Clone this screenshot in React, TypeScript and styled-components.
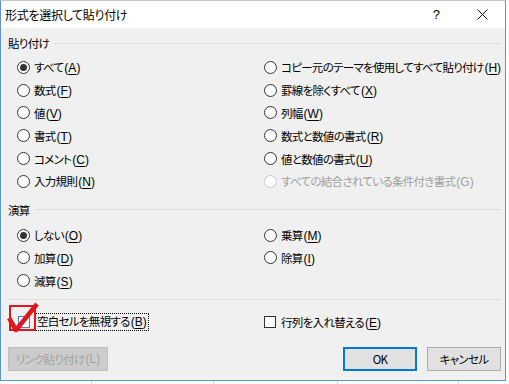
import React from 'react';
import styled, { createGlobalStyle } from 'styled-components';

const GlobalStyle = createGlobalStyle`
  html, body {
    margin: 0;
    padding: 0;
  }
  body {
    width: 509px;
    height: 384px;
    overflow: hidden;
    background-color: #ffffff;
    background-image: linear-gradient(90deg, transparent 91px, #d4d4d4 91px, #d4d4d4 92px, transparent 92px),
      linear-gradient(90deg, transparent 213px, #d4d4d4 213px, #d4d4d4 214px, transparent 214px),
      linear-gradient(90deg, transparent 337px, #d4d4d4 337px, #d4d4d4 338px, transparent 338px),
      linear-gradient(90deg, transparent 458px, #d4d4d4 458px, #d4d4d4 459px, transparent 459px);
    font-family: "Noto Sans CJK JP", "Liberation Sans", sans-serif;
    font-feature-settings: "palt";
    font-size: 11.5px;
    letter-spacing: -0.7px;
    color: #000;
  }
`;

const Dialog = styled.div`
  position: relative;
  width: 504px;
  height: 379px;
  border: 1px solid #5b93d3;
  border-top-color: #c8c8c8;
  background: #f0f0f0;
  display: flex;
  flex-direction: column;
`;

const TitleBar = styled.div`
  height: 27px;
  background: #fff;
  display: flex;
  align-items: center;
`;

const Title = styled.div`
  flex: 1;
  padding-left: 4px;
  font-size: 12px;
  letter-spacing: -0.3px;
`;

const TitleButton = styled.div`
  width: 46px;
  height: 27px;
  display: flex;
  align-items: center;
  justify-content: center;
  font-family: "Liberation Sans", sans-serif;
  font-size: 13px;
`;

const Body = styled.div`
  flex: 1;
  padding: 7px 4px 0 7px;
  display: flex;
  flex-direction: column;
`;

const GroupHeader = styled.div<{ top?: number }>`
  display: flex;
  align-items: center;
  gap: 5px;
  height: 16px;
  margin-top: ${({ top }) => top ?? 0}px;
  &::after {
    content: '';
    flex: 1;
    height: 1px;
    background: #dcdcdc;
  }
`;

const OptionGrid = styled.div<{ top: number }>`
  display: grid;
  grid-template-columns: 247px 1fr;
  grid-auto-rows: 22.8px;
  margin-top: ${({ top }) => top}px;
  padding-left: 9px;
`;

const OptionLabel = styled.label<{ disabled?: boolean }>`
  display: flex;
  align-items: center;
  gap: 4px;
  white-space: nowrap;
  color: ${({ disabled }) => (disabled ? '#a0a0a0' : '#000')};
`;

const Circle = styled.span<{ checked?: boolean; disabled?: boolean }>`
  box-sizing: border-box;
  width: 13px;
  height: 13px;
  border-radius: 50%;
  border: 1px solid ${({ disabled }) => (disabled ? '#c8c8c8' : '#333')};
  background: #fff;
  display: flex;
  align-items: center;
  justify-content: center;
  &::after {
    content: '';
    display: ${({ checked }) => (checked ? 'block' : 'none')};
    width: 7px;
    height: 7px;
    border-radius: 50%;
    background: #333;
  }
`;

const Accel = styled.span`
  font-family: "Liberation Sans", sans-serif;
  font-size: 12px;
  letter-spacing: 0;
  margin-left: 1px;
`;

const Key = styled.span`
  text-decoration: underline;
  text-underline-offset: 2px;
`;

const Separator = styled.div`
  height: 1px;
  background: #dcdcdc;
  margin: 7px 0 0 0;
`;

const CheckRow = styled.div`
  display: grid;
  grid-template-columns: 246px 1fr;
  height: 22px;
  margin-top: 11px;
  padding-left: 10px;
  align-items: center;
`;

const CheckLabel = styled.label`
  position: relative;
  display: flex;
  align-items: center;
  gap: 5px;
  white-space: nowrap;
`;

const Box = styled.span<{ blue?: boolean }>`
  box-sizing: border-box;
  width: 12px;
  height: 12px;
  border: 1px solid ${({ blue }) => (blue ? '#3c7fd0' : '#333')};
  background: #fff;
`;

const Focus = styled.span`
  border: 1px dotted #000;
  padding: 0 1px;
  line-height: 15px;
`;

const Annotation = styled.svg`
  position: absolute;
  left: -9px;
  top: -8px;
  overflow: visible;
`;

const ButtonRow = styled.div`
  display: flex;
  align-items: center;
  margin-top: 14px;
`;

const Button = styled.div<{ variant?: 'default' | 'primary' | 'disabled' }>`
  box-sizing: border-box;
  height: 24px;
  display: flex;
  align-items: center;
  justify-content: center;
  background: ${({ variant }) => (variant === 'disabled' ? '#cccccc' : '#e1e1e1')};
  border: ${({ variant }) =>
    variant === 'primary' ? '2px solid #0078d7' : variant === 'disabled' ? '1px solid #bfbfbf' : '1px solid #adadad'};
  color: ${({ variant }) => (variant === 'disabled' ? '#a3a3a3' : '#000')};
`;

const Spacer = styled.div`
  flex: 1;
`;

type Opt = { text: string; accel?: string; checked?: boolean; disabled?: boolean; tail?: string };

function Shortcut({ accel, tail }: { accel?: string; tail?: string }) {
  return (
    <Accel>
      {accel ? (
        <>
          (<Key>{accel}</Key>)
        </>
      ) : (
        tail
      )}
    </Accel>
  );
}

function Radio({ text, accel, checked, disabled, tail }: Opt) {
  return (
    <OptionLabel disabled={disabled}>
      <Circle checked={checked} disabled={disabled} />
      <span>
        {text}
        <Shortcut accel={accel} tail={tail} />
      </span>
    </OptionLabel>
  );
}

const paste: Opt[] = [
  { text: 'すべて', accel: 'A', checked: true },
  { text: 'コピー元のテーマを使用してすべて貼り付け', accel: 'H' },
  { text: '数式', accel: 'F' },
  { text: '罫線を除くすべて', accel: 'X' },
  { text: '値', accel: 'V' },
  { text: '列幅', accel: 'W' },
  { text: '書式', accel: 'T' },
  { text: '数式と数値の書式', accel: 'R' },
  { text: 'コメント', accel: 'C' },
  { text: '値と数値の書式', accel: 'U' },
  { text: '入力規則', accel: 'N' },
  { text: 'すべての結合されている条件付き書式', tail: '(G)', disabled: true },
];

const ops: Opt[] = [
  { text: 'しない', accel: 'O', checked: true },
  { text: '乗算', accel: 'M' },
  { text: '加算', accel: 'D' },
  { text: '除算', accel: 'I' },
  { text: '減算', accel: 'S' },
];

export default function App() {
  return (
    <>
      <GlobalStyle />
      <Dialog>
        <TitleBar>
          <Title>形式を選択して貼り付け</Title>
          <TitleButton>?</TitleButton>
          <TitleButton>
            <svg width="11" height="11" viewBox="0 0 11 11">
              <path d="M0.5 0.5 L10.5 10.5 M10.5 0.5 L0.5 10.5" stroke="#111" strokeWidth="1" />
            </svg>
          </TitleButton>
        </TitleBar>
        <Body>
          <GroupHeader>貼り付け</GroupHeader>
          <OptionGrid top={5}>
            {paste.map((o, i) => (
              <Radio {...o} key={i} />
            ))}
          </OptionGrid>
          <GroupHeader top={9}>演算</GroupHeader>
          <OptionGrid top={6}>
            {ops.map((o, i) => (
              <Radio {...o} key={i} />
            ))}
          </OptionGrid>
          <Separator />
          <CheckRow>
            <CheckLabel>
              <Box blue />
              <Focus>
                空白セルを無視する
                <Shortcut accel="B" />
              </Focus>
              <Annotation width="28" height="27" viewBox="0 0 28 27">
                <rect x="1" y="1" width="25" height="24" fill="none" stroke="#e0161d" strokeWidth="2" />
                <path d="M0 13 L7 25 L28 -1" fill="none" stroke="#e0161d" strokeWidth="4.5" strokeLinejoin="round" />
              </Annotation>
            </CheckLabel>
            <CheckLabel>
              <Box />
              <span>
                行列を入れ替える
                <Shortcut accel="E" />
              </span>
            </CheckLabel>
          </CheckRow>
          <ButtonRow>
            <Button variant="disabled" style={{ width: 100 }}>
              リンク貼り付け<Accel>(L)</Accel>
            </Button>
            <Spacer />
            <Button variant="primary" style={{ width: 74 }}>
              OK
            </Button>
            <Button style={{ width: 74, marginLeft: 10 }}>キャンセル</Button>
          </ButtonRow>
        </Body>
      </Dialog>
    </>
  );
}
